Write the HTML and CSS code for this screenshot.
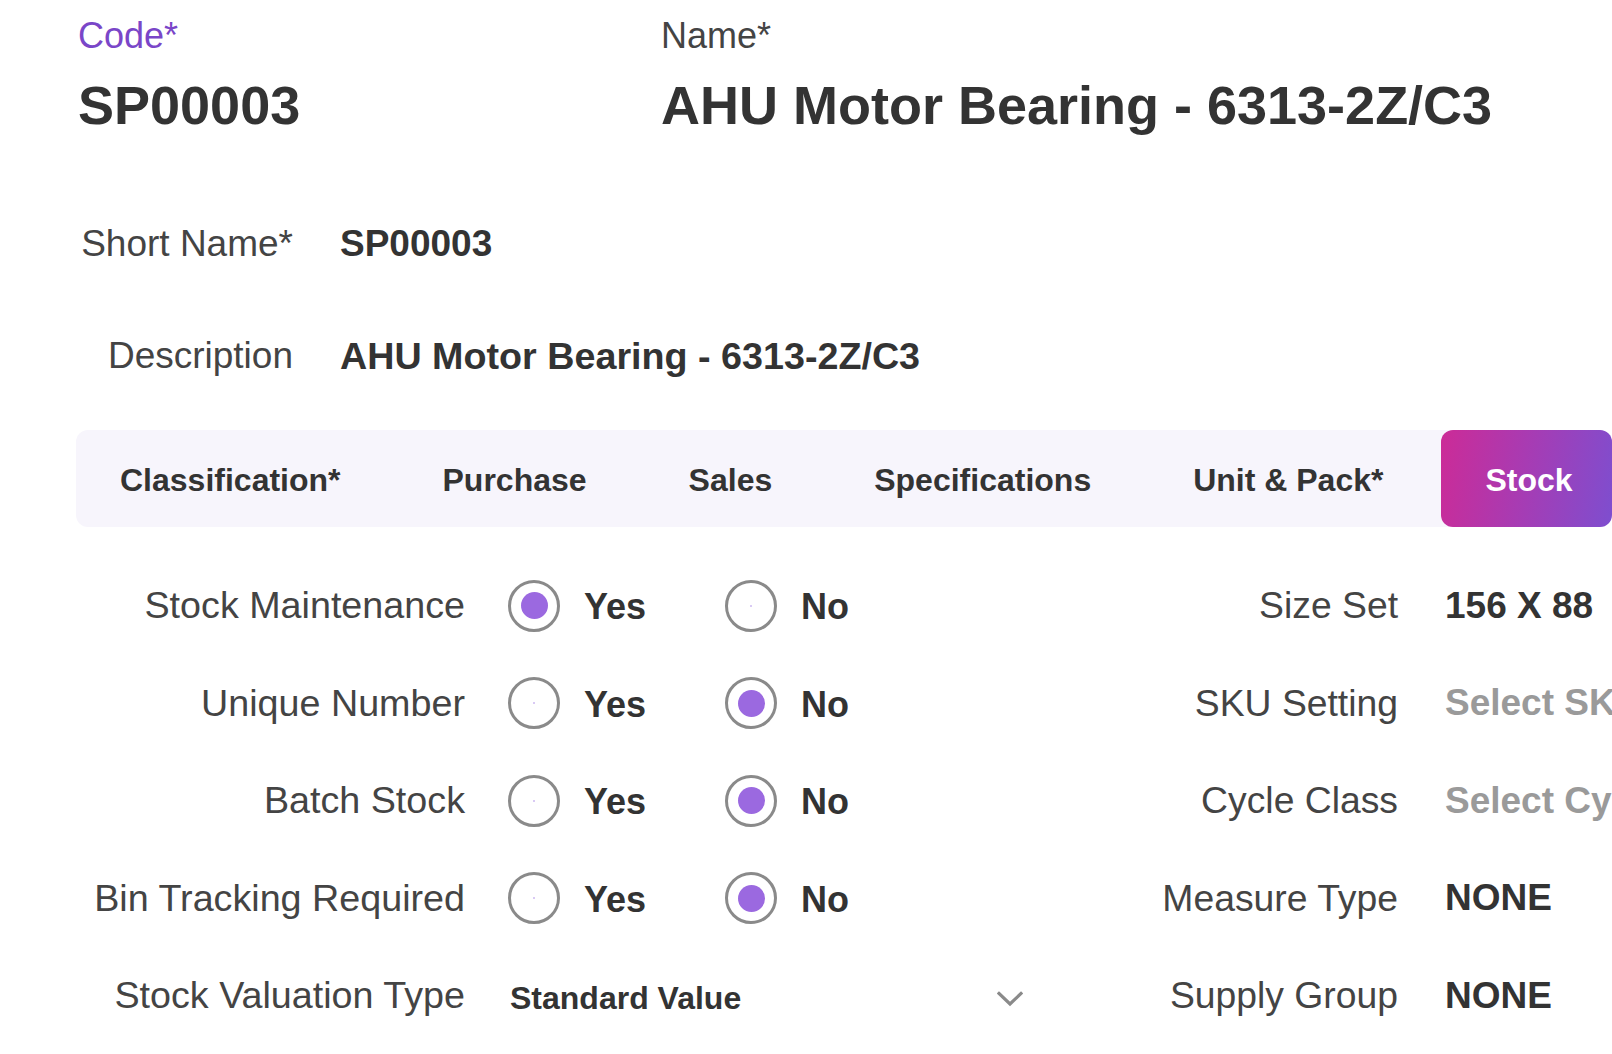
FILE: index.html
```html
<!DOCTYPE html>
<html lang="en">
<head>
<meta charset="utf-8">
<title>Item - SP00003</title>
<link rel="stylesheet" href="styles.css">
</head>
<body>
<div class="page">
  <div class="header">
    <div class="head-field">
      <div class="head-label head-label--accent">Code*</div>
      <div class="head-value">SP00003</div>
    </div>
    <div class="head-field">
      <div class="head-label">Name*</div>
      <div class="head-value">AHU Motor Bearing - 6313-2Z/C3</div>
    </div>
  </div>

  <div class="meta">
    <div class="meta-label">Short Name*</div>
    <div class="meta-value">SP00003</div>
    <div class="meta-label">Description</div>
    <div class="meta-value meta-value--long">AHU Motor Bearing - 6313-2Z/C3</div>
  </div>

  <div class="tabs">
    <div class="tab">Classification*</div>
    <div class="tab">Purchase</div>
    <div class="tab">Sales</div>
    <div class="tab">Specifications</div>
    <div class="tab">Unit &amp; Pack*</div>
    <div class="tab tab--active">Stock</div>
  </div>

  <div class="form">
    <div class="f-label">Stock Maintenance</div>
    <div class="f-control">
      <label class="option"><span class="radio radio--on"><span class="dot"></span></span><span class="opt-text">Yes</span></label>
      <label class="option"><span class="radio"><span class="dot"></span></span><span class="opt-text">No</span></label>
    </div>
    <div class="r-label">Size Set</div>
    <div class="r-value">156 X 88</div>

    <div class="f-label">Unique Number</div>
    <div class="f-control">
      <label class="option"><span class="radio"><span class="dot"></span></span><span class="opt-text">Yes</span></label>
      <label class="option"><span class="radio radio--on"><span class="dot"></span></span><span class="opt-text">No</span></label>
    </div>
    <div class="r-label">SKU Setting</div>
    <div class="r-value r-value--placeholder">Select SKU Setting</div>

    <div class="f-label">Batch Stock</div>
    <div class="f-control">
      <label class="option"><span class="radio"><span class="dot"></span></span><span class="opt-text">Yes</span></label>
      <label class="option"><span class="radio radio--on"><span class="dot"></span></span><span class="opt-text">No</span></label>
    </div>
    <div class="r-label">Cycle Class</div>
    <div class="r-value r-value--placeholder">Select Cycle Class</div>

    <div class="f-label">Bin Tracking Required</div>
    <div class="f-control">
      <label class="option"><span class="radio"><span class="dot"></span></span><span class="opt-text">Yes</span></label>
      <label class="option"><span class="radio radio--on"><span class="dot"></span></span><span class="opt-text">No</span></label>
    </div>
    <div class="r-label">Measure Type</div>
    <div class="r-value">NONE</div>

    <div class="f-label">Stock Valuation Type</div>
    <div class="f-control">
      <div class="select">
        <span class="select-text">Standard Value</span>
        <svg class="chevron" width="26" height="16" viewBox="0 0 26 16" aria-hidden="true">
          <polyline points="2,2.5 13,13 24,2.5" fill="none" stroke="#8a8a8a" stroke-width="3.2" stroke-linecap="square" stroke-linejoin="miter"/>
        </svg>
      </div>
    </div>
    <div class="r-label">Supply Group</div>
    <div class="r-value">NONE</div>
  </div>
</div>
</body>
</html>
```

FILE: styles.css
```css
html, body {
  margin: 0;
  padding: 0;
  background: #ffffff;
  overflow: hidden;
}

body {
  font-family: "Liberation Sans", Arial, Helvetica, sans-serif;
  color: #333333;
  width: 1612px;
  height: 1054px;
}

.page {
  padding: 12px 0 0 76px;
}

/* Header */
.header {
  display: grid;
  grid-template-columns: 583px auto;
  padding-left: 2px;
}

.head-label {
  margin-top: 3px;
  font-size: 36px;
  line-height: 42px;
  color: #444444;
  white-space: nowrap;
}

.head-label--accent {
  color: #7a46c8;
}

.head-value {
  margin-top: 17px;
  font-size: 54px;
  line-height: 62px;
  font-weight: 700;
  color: #333333;
  white-space: nowrap;
}

/* Short name / description */
.meta {
  display: grid;
  grid-template-columns: 217px auto;
  column-gap: 47px;
  row-gap: 68px;
  margin-top: 86px;
}

.meta-label {
  font-size: 37px;
  line-height: 44px;
  color: #444444;
  text-align: right;
  white-space: nowrap;
}

.meta-value {
  font-size: 37px;
  line-height: 44px;
  font-weight: 700;
  color: #333333;
  white-space: nowrap;
}

.meta-value--long {
  font-size: 37.7px;
}

/* Tabs */
.tabs {
  display: flex;
  flex-wrap: nowrap;
  gap: 14px;
  height: 97px;
  margin-top: 52px;
  background: #f7f5fc;
  border-radius: 12px;
}

.tab {
  flex-shrink: 0;
  display: flex;
  align-items: center;
  padding: 4px 44px 0;
  font-size: 32px;
  font-weight: 700;
  color: #333333;
  white-space: nowrap;
}

.tab--active {
  padding: 4px 39px 0 44px;
  color: #ffffff;
  border-radius: 12px;
  background: linear-gradient(100deg, #cc2b97 0%, #a63cb4 50%, #7e4ecf 100%);
}

/* Stock form */
.form {
  display: grid;
  grid-template-columns: 389px 573px 360px auto;
  grid-auto-rows: 97.5px;
  align-items: center;
  margin-top: 30px;
}

.f-label {
  font-size: 37.7px;
  color: #444444;
  text-align: right;
  white-space: nowrap;
}

.f-control {
  display: flex;
  align-items: center;
  padding-left: 43px;
}

.option {
  display: flex;
  align-items: center;
  gap: 24px;
  width: 217px;
}

.radio {
  box-sizing: border-box;
  width: 52px;
  height: 52px;
  border: 3.5px solid #8a8a8a;
  border-radius: 50%;
  display: flex;
  align-items: center;
  justify-content: center;
  flex-shrink: 0;
}

.radio .dot {
  width: 2px;
  height: 2px;
  border-radius: 50%;
  background: #cdb8f0;
}

.radio--on .dot {
  width: 27px;
  height: 27px;
  background: #9b69e0;
}

.opt-text {
  margin-top: 3px;
  font-size: 36px;
  font-weight: 700;
  color: #333333;
}

.select {
  box-sizing: border-box;
  width: 530px;
  display: flex;
  align-items: center;
  justify-content: space-between;
  padding: 0 15px 0 2px;
}

.select-text {
  margin-top: 5px;
  font-size: 32px;
  font-weight: 700;
  color: #333333;
  white-space: nowrap;
}

.chevron {
  display: block;
  margin-top: 6px;
}

.r-label {
  font-size: 37.3px;
  color: #444444;
  text-align: right;
  white-space: nowrap;
}

.r-value {
  padding-left: 47px;
  font-size: 37px;
  font-weight: 700;
  color: #333333;
  white-space: nowrap;
}

.r-value--placeholder {
  color: #9a9a9a;
}
```
